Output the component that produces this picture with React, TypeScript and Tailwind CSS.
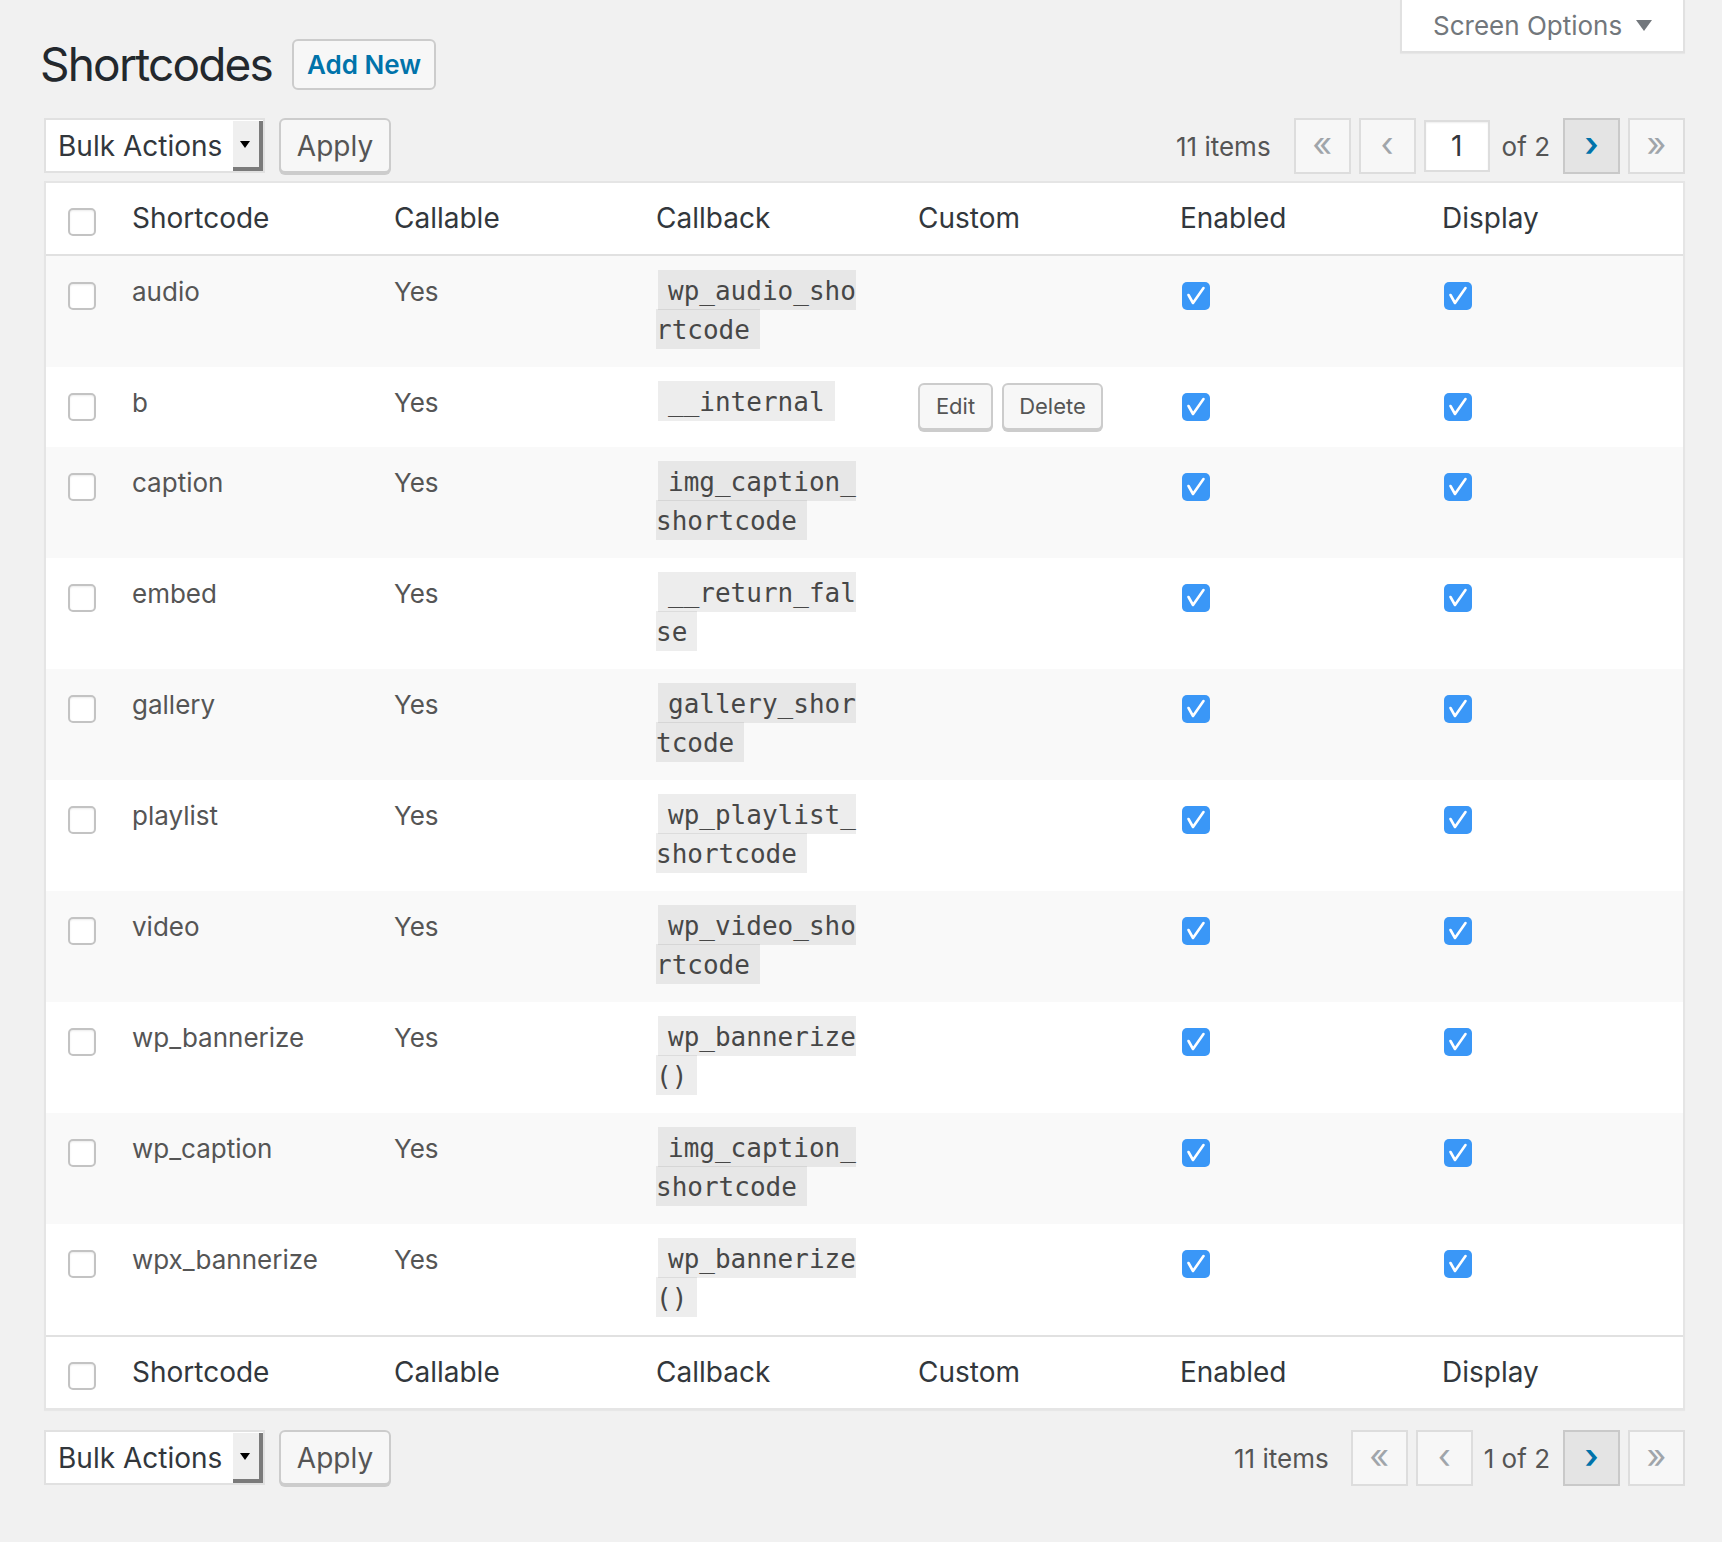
import React from "react";

type Row = { name: string; cb: string; custom?: boolean };

const rows: Row[] = [
  { name: "audio", cb: "wp_audio_shortcode" },
  { name: "b", cb: "__internal", custom: true },
  { name: "caption", cb: "img_caption_shortcode" },
  { name: "embed", cb: "__return_false" },
  { name: "gallery", cb: "gallery_shortcode" },
  { name: "playlist", cb: "wp_playlist_shortcode" },
  { name: "video", cb: "wp_video_shortcode" },
  { name: "wp_bannerize", cb: "wp_bannerize()" },
  { name: "wp_caption", cb: "img_caption_shortcode" },
  { name: "wpx_bannerize", cb: "wp_bannerize()" },
];

function Box() {
  return (
    <span className="block w-[28px] h-[28px] rounded-[5px] border-2 border-[#c3c3c3] bg-white shadow-[inset_0_1px_2px_rgba(0,0,0,0.08)]" />
  );
}

function Checked() {
  return (
    <span className="flex w-[28px] h-[28px] rounded-[5px] bg-[#3a97f7] items-center justify-center">
      <svg width="28" height="28" viewBox="0 0 28 28">
        <path d="M6.5 13 L11 21 L21.5 6" fill="none" stroke="#ffffff" strokeWidth="2.6" strokeLinecap="round" strokeLinejoin="round" />
      </svg>
    </span>
  );
}

function BulkBar() {
  return (
    <div className="flex items-start gap-[14px]">
      <div className="flex h-[55px] w-[221px] border-2 border-[#e1e1e1] bg-white">
        <div className="flex-1 flex items-center pl-[12px] text-[28px] text-[#32373c]">Bulk Actions</div>
        <div className="w-[30px] mt-[1px] bg-[#efefef] border-r-[4px] border-b-[4px] border-[#7b7b7b] flex items-center justify-center">
          <span className="block w-0 h-0 border-l-[5px] border-r-[5px] border-t-[7px] border-l-transparent border-r-transparent border-t-black mr-[2px]" />
        </div>
      </div>
      <button className="h-[55px] w-[112px] rounded-[6px] border-2 border-[#cccccc] bg-[#f7f7f7] shadow-[0_2px_0_#cccccc] text-[28px] text-[#555] flex items-center justify-center">
        Apply
      </button>
    </div>
  );
}

function NavBtn({ ch, active }: { ch: string; active?: boolean }) {
  return (
    <span
      className={
        active
          ? "flex w-[57px] h-[56px] items-center justify-center border-2 border-[#c9c9c9] bg-[#e4e4e4] text-[34px] text-[#0073aa] font-semibold leading-none pb-[4px]"
          : "flex w-[57px] h-[56px] items-center justify-center border-2 border-[#dddddd] bg-[#f7f7f7] text-[34px] text-[#a0a5aa] leading-none pb-[4px]"
      }
    >
      {ch}
    </span>
  );
}

function Pager({ top }: { top?: boolean }) {
  return (
    <div className="flex items-center text-[26px] text-[#555]">
      <span className={top ? "mr-[23px]" : "mr-[22px]"}>11 items</span>
      <NavBtn ch="«" />
      <span className="w-[8px]" />
      <NavBtn ch="‹" />
      {top ? (
        <>
          <span className="ml-[8px] flex w-[66px] h-[52px] items-center justify-center border-2 border-[#dddddd] bg-white shadow-[inset_0_1px_2px_rgba(0,0,0,0.07)] text-[28px] text-[#32373c]">
            1
          </span>
          <span className="ml-[12px] mr-[13px]">of 2</span>
        </>
      ) : (
        <span className="ml-[11px] mr-[13px]">1 of 2</span>
      )}
      <NavBtn ch="›" active />
      <span className="w-[8px]" />
      <NavBtn ch="»" />
    </div>
  );
}

const grid = "grid grid-cols-[70px_262px_262px_262px_262px_262px_1fr]";

function HeadRow({ footer }: { footer?: boolean }) {
  return (
    <div
      className={
        grid +
        " bg-white text-[28px] leading-[39px] text-[#32373c] " +
        (footer ? "border-t-2 border-[#e1e1e1]" : "border-b-2 border-[#e1e1e1]")
      }
    >
      <div className="pl-[22px] pt-[25px]">
        <Box />
      </div>
      {["Shortcode", "Callable", "Callback", "Custom", "Enabled", "Display"].map((h) => (
        <div key={h} className="pl-[16px] pt-[16px] pb-[16px]">
          {h}
        </div>
      ))}
    </div>
  );
}

const mono = "[font-family:'DejaVu_Sans_Mono',monospace]";

function BodyRow({ r, i }: { r: Row; i: number }) {
  return (
    <div className={grid + " text-[26px] leading-[39px] text-[#555] " + (i % 2 === 0 ? "bg-[#f9f9f9]" : "bg-white")}>
      <div className="pl-[22px] pt-[26px]">
        <Box />
      </div>
      <div className="pl-[16px] pt-[16px] pb-[17px]">{r.name}</div>
      <div className="pl-[16px] pt-[16px] pb-[17px]">Yes</div>
      <div className="pl-[16px] pt-[16px] pb-[17px]">
        <div className={"w-[206px] [word-break:break-all] text-[26px] leading-[39px] text-[#474747] " + mono}>
          <code className={"bg-black/[0.07] pt-[6px] pb-[4px] px-[10px] mx-[2px] text-[26px] " + mono}>{r.cb}</code>
        </div>
      </div>
      <div className="pl-[16px] pt-[16px] pb-[17px]">
        {r.custom ? (
          <div className="flex gap-[9px]">
            <button className="h-[47px] w-[75px] rounded-[6px] border-2 border-[#cccccc] bg-[#f7f7f7] shadow-[0_2px_0_#cccccc] text-[22px] text-[#555] flex items-center justify-center">
              Edit
            </button>
            <button className="h-[47px] w-[101px] rounded-[6px] border-2 border-[#cccccc] bg-[#f7f7f7] shadow-[0_2px_0_#cccccc] text-[22px] text-[#555] flex items-center justify-center">
              Delete
            </button>
          </div>
        ) : null}
      </div>
      <div className="pl-[18px] pt-[26px]">
        <Checked />
      </div>
      <div className="pl-[18px] pt-[26px]">
        <Checked />
      </div>
    </div>
  );
}

export default function App() {
  return (
    <div className="relative min-h-[1542px] bg-[#f1f1f1] [font-family:Inter,'Noto_Sans',sans-serif]">
      <div className="absolute top-0 right-[37px] w-[285px] h-[53px] bg-white border-x-2 border-b-2 border-[#e1e1e1] shadow-[0_1px_1px_rgba(0,0,0,0.04)] flex items-center pl-[31px] text-[26px] text-[#72777c]">
        <span>Screen Options</span>
        <span className="ml-[14px] block w-0 h-0 border-l-[8px] border-r-[8px] border-t-[11px] border-l-transparent border-r-transparent border-t-[#72777c]" />
      </div>
      <div className="pl-[44px] pr-[37px] pt-[39px]">
        <div className="flex items-center gap-[20px] h-[51px]">
          <h1 className="ml-[-4px] text-[46px] leading-[51px] tracking-[-1.8px] text-[#23282d] font-normal">Shortcodes</h1>
          <button className="h-[51px] w-[144px] rounded-[6px] border-2 border-[#cccccc] bg-[#f7f7f7] text-[26px] font-semibold text-[#0073aa] flex items-center justify-center">
            Add New
          </button>
        </div>
        <div className="mt-[28px] flex items-start justify-between h-[56px]">
          <BulkBar />
          <Pager top />
        </div>
        <div className="mt-[7px] border-2 border-[#e5e5e5] bg-white shadow-[0_1px_1px_rgba(0,0,0,0.04)]">
          <HeadRow />
          {rows.map((r, i) => (
            <BodyRow key={r.name} r={r} i={i} />
          ))}
          <HeadRow footer />
        </div>
        <div className="mt-[20px] flex items-start justify-between h-[56px]">
          <BulkBar />
          <Pager />
        </div>
      </div>
    </div>
  );
}
